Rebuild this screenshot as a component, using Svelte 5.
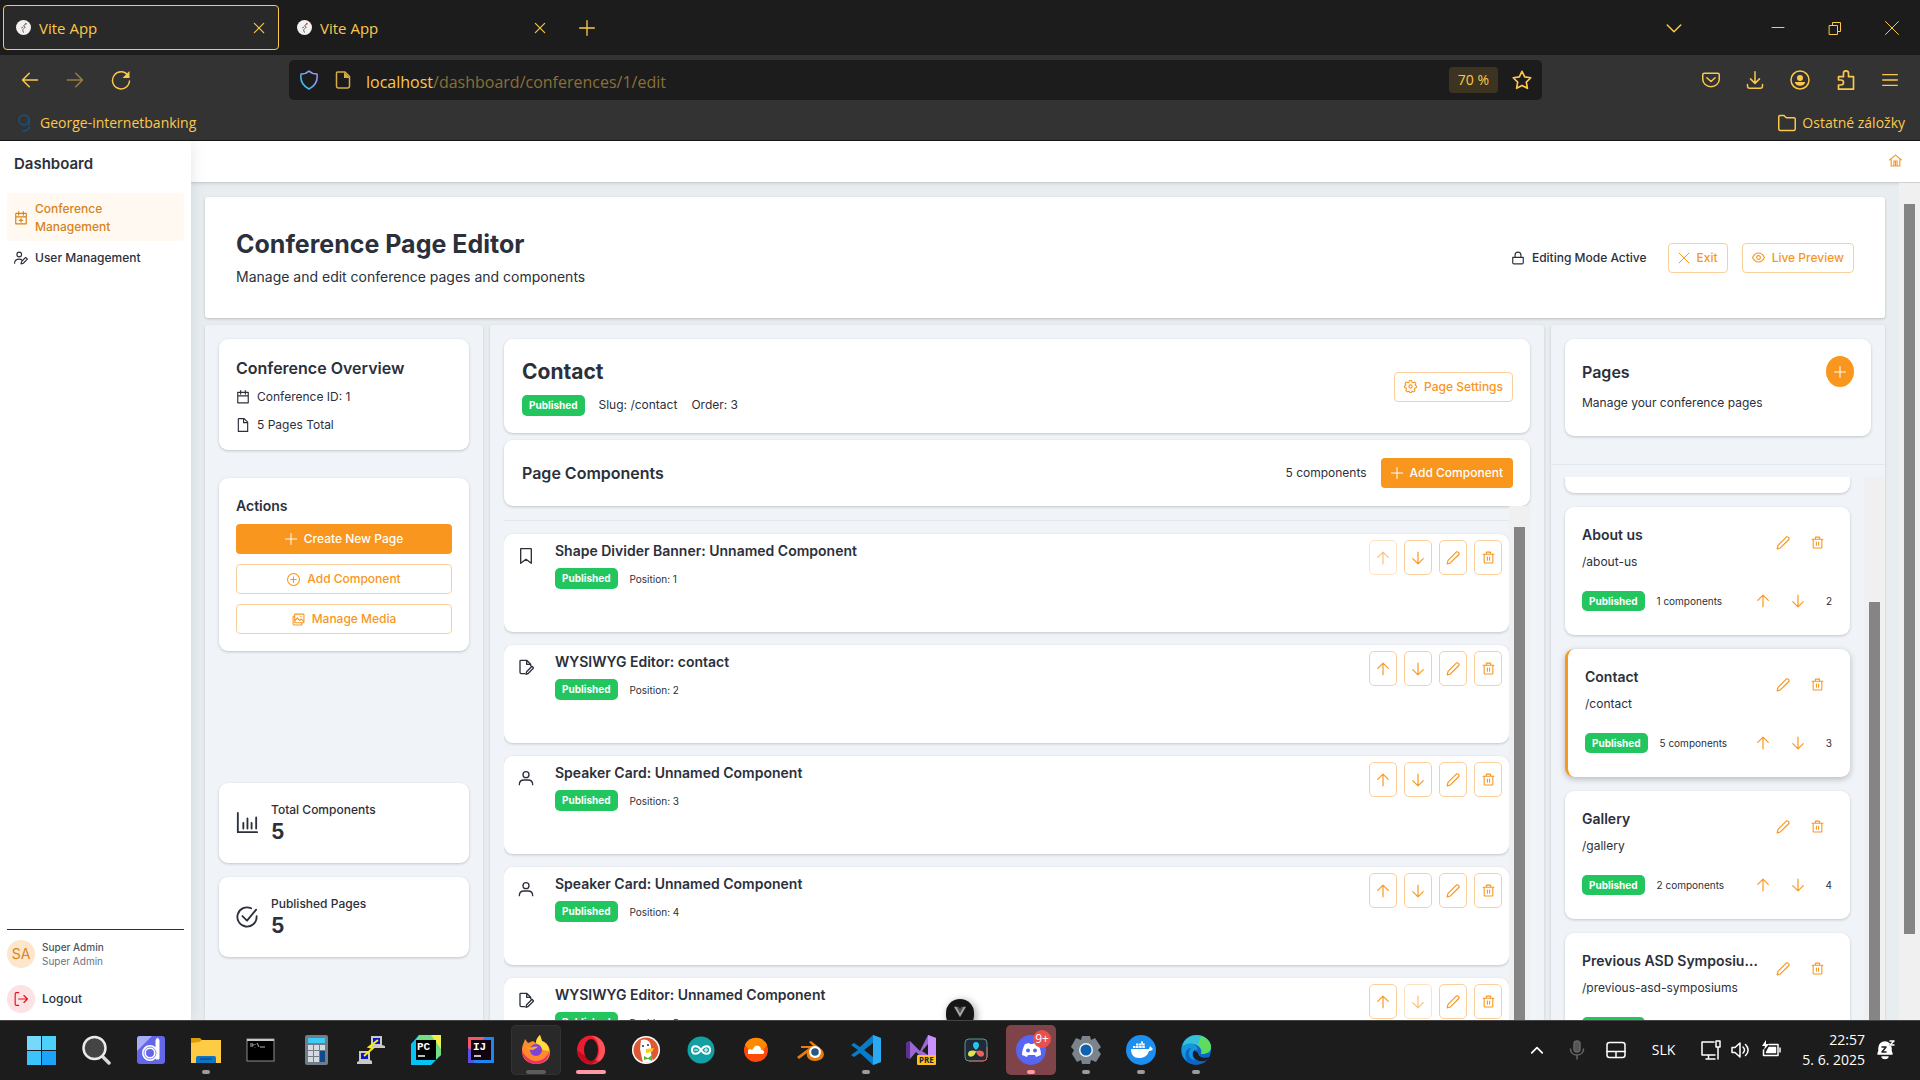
<script>
  // Line icons drawn on a 24-unit grid.
  const icons = {
    calendarPlus: 'M4 4h16a1 1 0 0 1 1 1v17H3V5a1 1 0 0 1 1-1zM3 10h18M8 1v6M16 1v6M12 13v6M9 16h6',
    calendar: 'M3 4h18v18H3zM3 10h18M8 1v6M16 1v6',
    userEdit: 'M13 6a4 4 0 1 1-8 0 4 4 0 0 1 8 0zM1 21c0-4 3-7 8-7 1.500 0 3 .3 4 .8M12 22l1-4 7-7 3 3-7 7z',
    user: 'M16.500 7a4.500 4.500 0 1 1-9 0 4.500 4.500 0 0 1 9 0zM2 22c0-5 3-7 7-7h6c4 0 7 2 7 7',
    lock: 'M3 11h18v9a2 2 0 0 1-2 2H5a2 2 0 0 1-2-2zM7 11V7a5 5 0 0 1 10 0v4',
    times: 'M4 4l16 16M20 4L4 20',
    exit: 'M2 2l20 20M22 2L2 22',
    eye: 'M1 12c5-11 17-11 22 0-5 11-17 11-22 0zM15.500 12a3.500 3.500 0 1 1-7 0 3.500 3.500 0 0 1 7 0z',
    file: 'M5 1h9l6 6v16H4V2a1 1 0 0 1 1-1zM13 1v7h7',
    fileEdit: 'M10 22H5a2 2 0 0 1-2-2V3a1 1 0 0 1 1-1h9l6 6v2M13 2v6h6M12 23l1-4 8-8 2.500 2.500-8 8z',
    plus: 'M12 1v22M1 12h22',
    plusCircle: 'M23 12a11 11 0 1 1-22 0 11 11 0 0 1 22 0zM12 7v10M7 12h10',
    images: 'M6 2h15a1 1 0 0 1 1 1v14a1 1 0 0 1-1 1H6a1 1 0 0 1-1-1V3a1 1 0 0 1 1-1zM5 6H3a1 1 0 0 0-1 1v13a2 2 0 0 0 2 2h14v-4M5 15l5-6 4 5 3-3 5 5M16 6.500h1',
    chart: 'M2 1v21h21M8 12v6M12.500 7v11M17 12v6M22 6v12',
    check: 'M22.500 11v1a10.500 10.500 0 1 1-6-9.500M7 11l5 5L22 4',
    cog: 'M10 1h4l.8 3 2 1L20 3.500 22 7l-1.500 2.500L23 11v3l-3 1-.8 2 1.300 3-3 2-2.500-1.500-1.500 2.500h-3L9 20.500 6.500 22l-3-2 1.300-3L4 15l-3-1v-3l2.500-1.500L2 7l2-3.500L7.200 5l2-1zM15 12a3 3 0 1 1-6 0 3 3 0 0 1 6 0z',
    bookmark: 'M4 1h15a1 1 0 0 1 1 1v21l-8-6-8 6z',
    up: 'M12 22V2M3 11l9-9 9 9',
    down: 'M12 2v20M3 13l9 9 9-9',
    pencil: 'M2 22l1.500-6L18 1.500c2-1 5.500 2 4 4.500L7.500 20.500z',
    trash: 'M2 6h20M4 6v15a1 1 0 0 0 1 1h14a1 1 0 0 0 1-1V6M8 6V3a1 1 0 0 1 1-1h6a1 1 0 0 1 1 1v3M10 11v6M14 11v6',
    home: 'M1 11L12 2l11 9M4 9v13h16V9M9 22v-9h6v9M12 14v8',
    logout: 'M8 1H4a2 2 0 0 0-2 2v18a2 2 0 0 0 2 2h4M8 12h15M17 6l6 6-6 6',
    back: 'M22 12H2M11 3l-9 9 9 9',
    forward: 'M2 12h20M13 3l9 9-9 9',
    chevron: 'M3 8l9 9 9-9',
    star: 'M12 1.500l3.200 6.800 7.300 1-5.300 5.200 1.300 7.500-6.500-3.500L5.500 22l1.300-7.500L1.500 9.300l7.300-1z',
    download: 'M12 1v15M6 10.500l6 6 6-6M2 18v2a3 3 0 0 0 3 3h14a3 3 0 0 0 3-3v-2',
    pocket: 'M3 3h18a2 2 0 0 1 2 2v6a11 10 0 0 1-22 0V5a2 2 0 0 1 2-2zM6.500 9l5.500 5 5.500-5',
    puzzle: 'M3 8h6V4a3 3 0 0 1 6 0v4h6v15H3v-5h3a2.500 2.500 0 0 0 0-6H3z',
    menu: 'M1 4h22M1 12h22M1 20h22',
    folder: 'M1 4a2 2 0 0 1 2-2h5l3 3h10a2 2 0 0 1 2 2v13a2 2 0 0 1-2 2H3a2 2 0 0 1-2-2z',
    caret: 'M3 17l9-9 9 9'
  };

  const components = [
    { icon: 'bookmark', title: 'Shape Divider Banner: Unnamed Component' },
    { icon: 'fileEdit', title: 'WYSIWYG Editor: contact' },
    { icon: 'user', title: 'Speaker Card: Unnamed Component' },
    { icon: 'user', title: 'Speaker Card: Unnamed Component' },
    { icon: 'fileEdit', title: 'WYSIWYG Editor: Unnamed Component' }
  ];

  const pages = [
    { title: 'About us', slug: '/about-us', count: 1, order: 2 },
    { title: 'Contact', slug: '/contact', count: 5, order: 3, active: true },
    { title: 'Gallery', slug: '/gallery', count: 2, order: 4 },
    { title: 'Previous ASD Symposiums', slug: '/previous-asd-symposiums', count: 1, order: 5 }
  ];

  const apps = [
    'Start', 'Search', 'Dopus', 'Explorer', 'Terminal', 'Calculator', 'PuTTY', 'PyCharm', 'IntelliJ', 'Firefox', 'Opera',
    'DuckDuckGo', 'Arduino', 'SoundCloud', 'Blender', 'VS Code', 'Visual Studio', 'Resolve', 'Discord', 'Settings', 'Docker', 'Edge'
  ];
  const running = ['Explorer', 'VS Code', 'Settings', 'Docker', 'Edge'];
</script>

{#snippet icon(name, cls = 'i14')}
  <svg class="icon {cls}" viewBox="0 0 24 24" aria-hidden="true"><path d={icons[name]} /></svg>
{/snippet}

{#snippet favicon()}
  <svg class="favicon" viewBox="0 0 16 16" aria-hidden="true">
    <circle cx="8" cy="8" r="8" fill="#f4f1f1" />
    <path d="M10 4L8 6.500l2 1-3 3M5.500 8.500l2-1M7 10.500l1 3" stroke="#6d5f61" stroke-width="1" fill="none" />
    <circle cx="10.500" cy="4" r="1" fill="#b55" />
  </svg>
{/snippet}

{#snippet appIcon(name)}
  <svg class="app-icon" viewBox="0 0 30 30" aria-hidden="true">
    {#if name === 'Start'}
      <path d="M1 1h14v14H1z" fill="#76d9fc" /><path d="M16 1h14v14H16z" fill="#4fd0fb" />
      <path d="M1 16h14v14H1z" fill="#3dc3fb" /><path d="M16 16h14v14H16z" fill="#1ba4fa" />
    {:else if name === 'Search'}
      <path d="M21 21l7 7" stroke="#d5d7d9" stroke-width="3.500" stroke-linecap="round" />
      <circle cx="13.500" cy="13" r="11" fill="#444" stroke="#e9ebec" stroke-width="2.500" />
    {:else if name === 'Dopus'}
      <rect x="1" y="1" width="28" height="28" rx="3" fill="#6366ea" /><path d="M1 4a3 3 0 0 1 3-3h12L1 16z" fill="#a9adf8" />
      <circle cx="14" cy="18" r="6" fill="none" stroke="#fff" stroke-width="4" /><path d="M20 24V5l1.500-2L23 5v19z" fill="#fff" stroke="#fff" />
      <circle cx="14" cy="18" r="6" fill="none" stroke="#8488f0" stroke-width="1" />
    {:else if name === 'Explorer'}
      <path d="M0 3h9l3 3h-1v5H0z" fill="#dd9b08" /><path d="M0 8l8-1 3-2h19v23H0z" fill="#ffcb45" />
      <path d="M5 28v-5a2 2 0 0 1 2-2h16a2 2 0 0 1 2 2v5z" fill="#0f74c4" /><path d="M9 24h12" stroke="#0a4f91" stroke-width="1.500" />
    {:else if name === 'Terminal'}
      <rect x="1" y="4" width="27" height="22" fill="#000" stroke="#8a8f94" /><path d="M1 5h27" stroke="#c3c7ca" stroke-width="2" />
      <path d="M4 9h3v2H4M9 9v1M9 12v0.500M11 8l2 4M14 12h5" stroke="#b5b5b5" fill="none" />
    {:else if name === 'Calculator'}
      <rect x="4" y="0" width="23" height="30" rx="2" fill="#747c87" /><path d="M7 3h17v5H7z" fill="#3ccbf4" />
      <path d="M7 10h5v5H7zM13 10h5v5h-5zM19 10h5v5h-5zM7 16h5v5H7zM13 16h5v5h-5zM7 22h5v5H7zM13 22h5v5h-5z" fill="#d3dae2" />
      <path d="M19 16h5v11h-5z" fill="#104a8c" />
    {:else if name === 'PuTTY'}
      <path d="M15 1h11v9l3 1v2H15zM3 16h11v9l2 1v3H1v-2l2-1z" fill="#c9c9c9" /><path d="M17 3h7v6h-7zM5 18h7v6H5z" fill="#0a12d4" />
      <path d="M22 5l-9 7 4 1-9 8" stroke="#f5ee0c" stroke-width="2" fill="none" />
    {:else if name === 'PyCharm'}
      <path d="M0 9l8-9h22v20L20 30H0z" fill="#06c3f5" /><path d="M8 0h22v20l-5 4V5H5z" fill="#74dd84" /><path d="M20 0h10v14z" fill="#eff04a" />
      <path d="M5 5h20v20H5z" fill="#000" /><text x="6" y="15" class="mono">PC</text><path d="M7 21h7" stroke="#fff" stroke-width="1.500" />
    {:else if name === 'IntelliJ'}
      <path d="M2 2h26v26H2z" fill="#1e86f0" /><path d="M2 2h17L2 20z" fill="#f5566a" /><path d="M2 13l6 3v12H2z" fill="#5d4fe0" />
      <path d="M5 5h20v20H5z" fill="#10030f" /><text x="7" y="15" class="mono">IJ</text><path d="M8 21h7" stroke="#fff" stroke-width="1.500" />
    {:else if name === 'Firefox'}
      <path d="M1 16C1 10 3 8 4 4l3 4 5-2 3 2c0-4 2-6 4-8l2 6c4 1 8 5 8 11 0 8-6 12-14 12S1 24 1 16z" fill="#ff8a2a" />
      <path d="M1 15c2 6 8 11 14 11s11-4 13-9c0 7-5 12-13 12S1 23 1 15z" fill="#f0306c" />
      <path d="M15 8c0-4 2-6 4-8l2 6c4 2 7 5 7 10l-6-1-4-5z" fill="#ffde3c" />
      <circle cx="15" cy="15" r="6" fill="#7d42d8" /><path d="M5 11c5 4 7-1 12 1l-5 3c-3 0-5-1-7-4z" fill="#ffa62e" />
    {:else if name === 'Opera'}
      <ellipse cx="15" cy="15" rx="14" ry="14.500" fill="#ed1c32" /><path d="M15 1c8 0 14 6 14 14s-6 14-14 14c6-2 8-8 8-14S21 3 15 1z" fill="#ff525a" />
      <path d="M1 15c1 10 8 14 14 14 3 0 6-1 8-3L13 24z" fill="#a7000f" opacity="0.600" /><ellipse cx="15" cy="15" rx="7" ry="11" fill="#1c1c1c" />
    {:else if name === 'DuckDuckGo'}
      <circle cx="15" cy="15" r="14" fill="#fff" /><circle cx="15" cy="15" r="12.500" fill="#de5833" />
      <path d="M10 5c5-2 10 1 10 7v6l2 9-10 1-3-14z" fill="#fff" /><path d="M15 14l8-1-2 4-6 1z" fill="#fdc91a" />
      <path d="M13 21l4 2 4-3v6l-4-2-4 1z" fill="#55b83c" /><circle cx="12" cy="11" r="1" fill="#234" /><circle cx="17" cy="10" r="1" fill="#234" />
    {:else if name === 'Arduino'}
      <circle cx="15" cy="15" r="13.500" fill="#12a0a5" /><path d="M15 15c-3-5-9-5-9 0s6 5 9 0 9-5 9 0-6 5-9 0z" fill="none" stroke="#fff" stroke-width="2" />
      <path d="M8 15h4M18 15h4M20 13v4" stroke="#fff" />
    {:else if name === 'SoundCloud'}
      <circle cx="15" cy="15" r="12" fill="#ff4a0a" /><path d="M4 10a12 12 0 0 1 22 0l-4 5H8z" fill="#ff8a00" />
      <path d="M7 19v-4l2-1 2 1 3-4c5-1 6 2 6 4 4 0 4 4 1 4z" fill="#fff" />
    {:else if name === 'Blender'}
      <path d="M1 22l12-9H5v-2h12l-4-4 2-1 9 7c7 5 4 13-5 13-6 0-9-4-8-8l-8 6z" fill="#ea7c0c" />
      <circle cx="19" cy="17" r="6" fill="#fff" /><circle cx="19" cy="17" r="3.800" fill="#265787" />
    {:else if name === 'VS Code'}
      <path d="M22 0l8 3v24l-8 3L9 18l-6 4-3-2 7-5-7-5 3-2 6 4z" fill="#087cc9" /><path d="M22 0l8 3v24l-8 3z" fill="#29aaf2" />
      <path d="M22 8v14l-9-7z" fill="#1c1c1c" />
    {:else if name === 'Visual Studio'}
      <path d="M0 8l4-2 10 10 8-16 8 3v22l-8 3L10 17l-6 7-4-2z" fill="#9a67d3" /><path d="M0 8l4-2v18l-4-2z" fill="#5d3191" /><path d="M22 0l8 3v22h-8z" fill="#c891fb" />
      <path d="M22 9v11l-6-4z" fill="#1c1c1c" /><rect x="11" y="20" width="19" height="10" rx="1" fill="#ffc21a" /><text x="13" y="28" class="pre">PRE</text>
    {:else if name === 'Resolve'}
      <rect x="4" y="4" width="22" height="22" rx="4" fill="#1d2c38" stroke="#5d9498" /><path d="M8 26h14a4 4 0 0 0 4-4V12" fill="none" stroke="#d85c50" />
      <path d="M12 10a3 3 0 0 1 6 0c0 3-2 4-3 5-1-1-3-2-3-5z" fill="#29c5e8" /><path d="M15 16c-1 7-8 7-8 3s5-4 8-3z" fill="#e1e34c" /><path d="M15 16c1 7 8 7 8 3s-5-4-8-3z" fill="#f2605a" />
    {:else if name === 'Discord'}
      <circle cx="15" cy="15" r="15" fill="#5865f2" />
      <path d="M9 9l4-1 1 1h3l1-1 4 1c2 4 3 7 3 11l-5 2-1-2H12l-1 2-5-2c0-4 1-7 3-11z" fill="#fff" /><circle cx="12" cy="15.500" r="2" fill="#5865f2" /><circle cx="19" cy="15.500" r="2" fill="#5865f2" />
    {:else if name === 'Settings'}
      <path d="M11 1h8l1 4 4-2 6 9-3 3 3 4-5 8-5-2-1 4h-8l-1-4-4 2-5-8 2-4-3-3 5-9 5 2z" fill="#7b838d" />
      <circle cx="15" cy="15" r="7" fill="#eef1f3" /><circle cx="15" cy="15" r="5.500" fill="#0d62b0" />
    {:else if name === 'Docker'}
      <circle cx="15" cy="15" r="15" fill="#1d8ff0" /><path d="M5 14h18l1-3 3 3c-2 2-3 2-4 2-2 6-6 7-10 7-5 0-8-3-8-9z" fill="#fff" />
      <path d="M7 12h12M10 9.500h9M15 7.500h2" stroke="#fff" stroke-width="2" stroke-dasharray="2.500 .6" />
    {:else if name === 'Edge'}
      <circle cx="15" cy="15" r="15" fill="#0c67c4" /><path d="M1 12C3 3 10 0 16 0c8 0 14 6 14 12 0 5-4 7-10 7 3-7-9-15-19-7z" fill="#35c1d8" />
      <path d="M20 1c6 2 10 6 10 11 0 5-4 7-10 7 2-4 0-7-3-9z" fill="#5fdc5d" /><path d="M13 15c-4 7 4 14 13 10l3-3c-6 2-12 0-12-4z" fill="#1c1c1c" />
      <path d="M1 12c8-7 15-2 16 3-5-2-8 5-3 10-6 0-8-7-4-12-4 0-8 5-4 13-4-3-6-8-5-14z" fill="#1596dd" />
    {/if}
  </svg>
{/snippet}

<div class="screen">
  <header class="tabs">
    <div class="tab current">{@render favicon()}<span>Vite App</span><button class="plain" aria-label="Close tab">{@render icon('times')}</button></div>
    <div class="tab">{@render favicon()}<span>Vite App</span><button class="plain" aria-label="Close tab">{@render icon('times')}</button></div>
    <button class="plain new-tab" aria-label="New tab">{@render icon('plus', 'i16')}</button>
    <div class="window-buttons">
      <button class="plain all-tabs" aria-label="List all tabs">{@render icon('chevron', 'i18')}</button>
      <button class="plain" aria-label="Minimize"><svg class="icon thin i14" viewBox="0 0 14 14"><path d="M1 6.500h12" /></svg></button>
      <button class="plain" aria-label="Restore"><svg class="icon thin i14" viewBox="0 0 14 14"><path d="M1.500 4.500h8v9h-8zM4.500 4.500v-3h8v9h-3" /></svg></button>
      <button class="plain" aria-label="Close"><svg class="icon thin i14" viewBox="0 0 14 14"><path d="M.5.500l13 13M13.500.500l-13 13" /></svg></button>
    </div>
  </header>

  <div class="toolbar">
    <div class="nav-buttons">
      <button class="plain" aria-label="Back">{@render icon('back', 'i18')}</button>
      <button class="plain dim" aria-label="Forward">{@render icon('forward', 'i18')}</button>
      <button class="plain" aria-label="Reload"><svg class="icon i20" viewBox="0 0 20 20"><path d="M17 5.500A8.500 8.500 0 1 0 18.500 11" /><path d="M18.500 1v7h-7z" fill="currentColor" stroke="none" /></svg></button>
    </div>
    <div class="url">
      <svg class="icon i20 shield" viewBox="0 0 20 20"><defs><linearGradient id="sh" x1="0" y1="1" x2="1" y2="0"><stop offset="0" stop-color="#27c9f5" /><stop offset="1" stop-color="#b48cf8" /></linearGradient></defs><path stroke="url(#sh)" d="M10 1c2 2 5 3 8 3 1 7-2 12-8 15C4 16 1 11 2 4c3 0 6-1 8-3z" /></svg>
      <svg class="icon i18 doc" viewBox="0 0 18 18"><path d="M3.500 1H11l4.500 4.500V15a2 2 0 0 1-2 2h-9a2 2 0 0 1-2-2V2a1 1 0 0 1 1-1z" /><path d="M10 1v6h6z" fill="currentColor" stroke="none" /></svg>
      <span class="address">localhost<span>/dashboard/conferences/1/edit</span></span>
      <button class="zoom">70 %</button>
      <button class="plain" aria-label="Bookmark this page">{@render icon('star', 'i20')}</button>
    </div>
    <div class="tools">
      <button class="plain" aria-label="Save to Pocket">{@render icon('pocket', 'i18')}</button>
      <button class="plain" aria-label="Downloads">{@render icon('download', 'i18')}</button>
      <button class="plain" aria-label="Account"><svg class="icon i20" viewBox="0 0 20 20"><circle cx="10" cy="10" r="9" /><circle cx="10" cy="8" r="3" fill="currentColor" stroke="none" /><path d="M5 12h10c0 5-10 5-10 0z" fill="currentColor" stroke="none" /></svg></button>
      <button class="plain" aria-label="Extensions">{@render icon('puzzle', 'i20')}</button>
      <button class="plain" aria-label="Menu">{@render icon('menu', 'i16')}</button>
    </div>
  </div>

  <div class="bookmarks">
    <a href="#george"><svg class="icon i18 george" viewBox="0 0 18 18"><circle cx="8" cy="6" r="5" /><path d="M13 6v5M13 13c0 3-3 4-6 4" /></svg>George-internetbanking</a>
    <a href="#other">{@render icon('folder', 'i18')}Ostatné záložky</a>
  </div>

  <div class="app">
    <aside class="sidebar">
      <h2>Dashboard</h2>
      <nav>
        <a class="active" href="#conferences">{@render icon('calendarPlus')}<span>Conference Management</span></a>
        <a href="#users">{@render icon('userEdit')}<span>User Management</span></a>
      </nav>
      <div class="account">
        <div class="account-row"><span class="avatar">SA</span><div class="who"><b>Super Admin</b><span>Super Admin</span></div></div>
        <button class="account-row logout"><span class="avatar red">{@render icon('logout', 'i14')}</span>Logout</button>
      </div>
    </aside>

    <div class="content">
      <div class="topbar"><a href="#home" aria-label="Home">{@render icon('home', 'i13')}</a></div>
      <div class="body">
        <main>
          <section class="hero">
            <div class="hero-text">
              <h1>Conference Page Editor</h1>
              <p>Manage and edit conference pages and components</p>
            </div>
            <div class="hero-actions">
              <span class="mode">{@render icon('lock')}Editing Mode Active</span>
              <button class="btn outline">{@render icon('exit', 'i12')}Exit</button>
              <button class="btn outline">{@render icon('eye', 'i13')}Live Preview</button>
            </div>
          </section>

          <div class="panels">
            <section class="panel left">
              <div class="card overview">
                <h3>Conference Overview</h3>
                <p>{@render icon('calendar')}Conference ID: 1</p>
                <p>{@render icon('file')}5 Pages Total</p>
              </div>
              <div class="card actions">
                <h4>Actions</h4>
                <button class="btn solid">{@render icon('plus', 'i12')}Create New Page</button>
                <button class="btn outline">{@render icon('plusCircle', 'i13')}Add Component</button>
                <button class="btn outline">{@render icon('images', 'i13')}Manage Media</button>
              </div>
              <div class="stats">
                <div class="card stat">{@render icon('chart', 'i22')}<div><span>Total Components</span><b>5</b></div></div>
                <div class="card stat">{@render icon('check', 'i22')}<div><span>Published Pages</span><b>5</b></div></div>
              </div>
            </section>

            <section class="panel middle">
              <div class="card page-head">
                <div>
                  <h2>Contact</h2>
                  <div class="meta"><span class="badge">Published</span><span>Slug: /contact</span><span>Order: 3</span></div>
                </div>
                <button class="btn outline">{@render icon('cog', 'i13')}Page Settings</button>
              </div>
              <div class="card list-head">
                <h3>Page Components</h3>
                <span>5 components</span>
                <button class="btn solid">{@render icon('plus', 'i12')}Add Component</button>
              </div>
              <div class="scroller">
                <div class="items">
                  <hr />
                  {#each components as c, i}
                    <article class="card item">
                      {@render icon(c.icon, 'i16 kind')}
                      <div class="item-text">
                        <h4>{c.title}</h4>
                        <div class="item-meta"><span class="badge">Published</span><span>Position: {i + 1}</span></div>
                      </div>
                      <div class="item-buttons">
                        <button aria-label="Move up" disabled={i === 0}>{@render icon('up')}</button>
                        <button aria-label="Move down" disabled={i === components.length - 1}>{@render icon('down')}</button>
                        <button aria-label="Edit">{@render icon('pencil')}</button>
                        <button aria-label="Delete">{@render icon('trash', 'i13')}</button>
                      </div>
                    </article>
                  {/each}
                </div>
                <div class="track"><div class="thumb list-thumb"></div></div>
              </div>
            </section>

            <section class="panel right">
              <div class="card pages-head">
                <div class="pages-title"><h3>Pages</h3><button class="round" aria-label="Add page">{@render icon('plus', 'i12')}</button></div>
                <p>Manage your conference pages</p>
              </div>
              <hr />
              <div class="scroller">
                <div class="page-list">
                  <div class="card tail"></div>
                  {#each pages as p}
                    <article class="card page" class:selected={p.active}>
                      <div class="page-top">
                        <div class="page-name"><h4>{p.title}</h4><span>{p.slug}</span></div>
                        <button class="ghost" aria-label="Edit page">{@render icon('pencil')}</button>
                        <button class="ghost" aria-label="Delete page">{@render icon('trash', 'i13')}</button>
                      </div>
                      <div class="page-bottom">
                        <span class="badge">Published</span><span class="count">{p.count} components</span>
                        <button class="ghost" aria-label="Move page up">{@render icon('up')}</button>
                        <button class="ghost" aria-label="Move page down">{@render icon('down')}</button>
                        <span class="order">{p.order}</span>
                      </div>
                    </article>
                  {/each}
                </div>
                <div class="track"><div class="thumb pages-thumb"></div></div>
              </div>
            </section>
          </div>
        </main>
        <div class="track main-track"><div class="thumb main-thumb"></div></div>
      </div>
    </div>
    <button class="devtools" aria-label="Toggle devtools"><svg viewBox="0 0 14 14"><path d="M0 1h3l4 7 4-7h3L7 13z" fill="#a4a4a4" /><path d="M3 1h2.500L7 3.500 8.500 1H11L7 8z" fill="#555" /></svg></button>
  </div>

  <footer class="taskbar">
    <div class="apps">
      {#each apps as name}
        <button class="app-button" class:focused={name === 'Firefox'} class:alert={name === 'Discord'} aria-label={name}>
          {@render appIcon(name)}
          {#if name === 'Discord'}<span class="count-badge">9+</span>{/if}
          {#if running.includes(name)}<i class="dot"></i>{/if}
          {#if name === 'Firefox'}<i class="dot wide"></i>{/if}
          {#if name === 'Opera'}<i class="dot widest"></i>{/if}
          {#if name === 'Discord'}<i class="dot pink"></i>{/if}
        </button>
      {/each}
    </div>
    <div class="tray">
      {@render icon('caret', 'i14 bold')}
      <svg class="icon i20 mic" viewBox="0 0 20 20"><rect x="7" y="1" width="6" height="11" rx="3" fill="#555" /><path d="M3.500 9c0 8 13 8 13 0M10 15v4" /></svg>
      <svg class="icon i20" viewBox="0 0 20 20"><rect x="1" y="2.500" width="18" height="15" rx="2.500" /><path d="M1 11.500h18M10 11.500v6" /></svg>
      <span class="lang">SLK</span>
      <div class="status">
        <svg class="icon i20" viewBox="0 0 20 20"><path d="M13 2H1v13h13M5 19h9M7.500 15v4" /><path d="M15 1h4v6h-4zM17 7v12" /></svg>
        <svg class="icon i20" viewBox="0 0 20 20"><path d="M1 7.500h3L9 3v14l-5-4.500H1zM12 7c2 2 2 4 0 6M14.500 4.500c3.500 3.500 3.500 7.500 0 11" /></svg>
        <svg class="icon i20" viewBox="0 0 20 20"><path d="M8 4.500h9v11H2.500V10" /><path d="M8 7.500h6.500v5h-9z" fill="#fff" /><path d="M19 8v4" /><path d="M5 0L1 6h3l-1 4 5-6H5z" fill="#fff" stroke="none" /></svg>
      </div>
      <div class="clock"><span>22:57</span><span>5. 6. 2025</span></div>
      <svg class="icon i20" viewBox="0 0 20 20"><path d="M3 14l1-3V8c0-4 3-6 6-6s6 3 6 6v3l1 3z" fill="#fff" /><path d="M7 17c1 2 5 2 6 0z" fill="#fff" /><path d="M7 7h4l-4 5h4M14 1h4l-3 4h4" stroke="#1c1c1c" /><path d="M15 1h4l-4 4h4" /></svg>
    </div>
  </footer>
</div>

<style>
  :global(body) { margin: 0; }
  .screen { display: flex; flex-direction: column; height: 100vh; overflow: hidden; font-family: Inter, "Liberation Sans", sans-serif; font-size: 12px; line-height: 18px; color: #2b303b; background: #e8edf0; }
  .screen :global(*) { box-sizing: border-box; }
  h1, h2, h3, h4, p { margin: 0; }
  button { font: inherit; color: inherit; padding: 0; border: 0; background: none; cursor: pointer; }
  a { color: inherit; text-decoration: none; }
  hr { flex: none; width: 100%; height: 1px; margin: 0; border: 0; background: #e3e8ed; }

  .icon { display: block; flex: none; fill: none; stroke: currentColor; stroke-width: 2; stroke-linejoin: round; stroke-linecap: round; }
  .i12 { width: 12px; height: 12px; }
  .i13 { width: 13px; height: 13px; }
  .i14 { width: 14px; height: 14px; }
  .i16 { width: 16px; height: 16px; }
  .i18 { width: 18px; height: 18px; }
  .i20 { width: 20px; height: 20px; }
  .i22 { width: 22px; height: 22px; }
  svg.i20[viewBox="0 0 20 20"], svg.i18[viewBox="0 0 18 18"] { stroke-width: 1.500; }
  .thin { stroke-width: 1; }
  .plain { display: flex; align-items: center; justify-content: center; }

  .tabs, .toolbar, .bookmarks { flex: none; display: flex; align-items: center; color: #fcc84c; font-family: "Open Sans", "Noto Sans", sans-serif; font-size: 15px; line-height: 20px; }
  .tabs { height: 55px; padding: 0 21px 0 3px; background: #1c1c1c; }
  .tab { display: flex; align-items: center; gap: 8px; width: 276px; height: 45px; margin-right: 5px; padding: 0 12px; border: 1px solid transparent; border-radius: 4px; }
  .tab.current { background: #292929; border-color: #fcc84c; }
  .tab .plain { margin-left: auto; }
  .favicon { width: 15px; height: 15px; }
  .new-tab { width: 44px; }
  .window-buttons { display: flex; margin-left: auto; gap: 43px; align-items: center; }
  .all-tabs { margin-right: 45px; }
  .toolbar { height: 50px; background: #333; padding: 0 22px 0 21px; }
  .nav-buttons { display: flex; align-items: center; gap: 27px; width: 268px; }
  .dim { opacity: 0.500; }
  .url { display: flex; align-items: center; flex: 1; height: 40px; padding: 0 10px; border-radius: 5px; background: #1c1c1c; }
  .doc { margin: 0 14px 0 15px; color: #d8ab43; }
  .address { flex: 1; padding-top: 3px; font-size: 16px; }
  .address span { color: #8a7038; }
  .zoom { padding: 3px 9px; margin-right: 14px; border-radius: 4px; background: #3d3321; font-size: 14px; }
  .tools { display: flex; align-items: center; gap: 26px; margin-left: 160px; }
  .bookmarks { height: 36px; padding: 1px 15px 0 16px; justify-content: space-between; background: #333; border-bottom: 1px solid #151515; font-size: 14px; }
  .bookmarks a { display: flex; align-items: center; gap: 6px; }
  .george { color: #17527e; }

  .app { position: relative; flex: 1; min-height: 0; display: flex; overflow: hidden; }
  .sidebar { position: relative; z-index: 1; width: 191px; flex: none; display: flex; flex-direction: column; padding: 0 7px; background: #fff; box-shadow: 0 0 14px rgba(60, 80, 90, 0.150); }
  .sidebar h2 { padding: 13px 7px 19px; font-size: 15px; line-height: 20px; font-weight: 600; }
  .sidebar nav a { display: flex; align-items: center; gap: 7px; padding: 7px 7px 5px; border-radius: 4px; font-weight: 500; }
  .sidebar nav a.active { margin-bottom: 1px; color: #d6831c; background: #fff9f2; }
  .account { display: flex; flex-direction: column; gap: 17px; margin-top: auto; padding: 10px 0 7px; border-top: 1px solid #2b303b; }
  .account-row { display: flex; align-items: center; gap: 7px; }
  .avatar { display: flex; align-items: center; justify-content: center; width: 28px; height: 28px; border-radius: 50%; background: #fde6cb; color: #d6831c; font-size: 14px; }
  .avatar.red { background: #fde2e4; color: #e5101f; }
  .who { display: flex; flex-direction: column; font-size: 10px; line-height: 14px; color: #6b7280; }
  .who b { font-weight: 500; color: #4b5563; }
  .logout { font-weight: 500; }

  .content { flex: 1; min-width: 0; display: flex; flex-direction: column; }
  .topbar { flex: none; display: flex; align-items: center; justify-content: flex-end; height: 42px; padding: 0 18px 2px; background: #fff; border-bottom: 1px solid #cdd1d3; box-shadow: 0 1px 3px rgba(0, 0, 0, 0.100); color: #f8961e; }
  .body { flex: 1; min-height: 0; display: flex; }
  main { flex: 1; min-width: 0; display: flex; flex-direction: column; gap: 7px; padding: 14px 14px 0; }
  .hero { flex: none; display: flex; align-items: center; justify-content: space-between; height: 121px; padding: 0 31px; border-radius: 3px; background: #fff; box-shadow: 0 1px 3px rgba(0, 0, 0, 0.200); }
  .hero-text { padding-bottom: 2px; }
  h1 { font-size: 25px; line-height: 34px; font-weight: 700; }
  .hero p { margin-top: 6px; font-size: 14px; line-height: 20px; }
  .hero-actions { display: flex; align-items: center; gap: 14px; }
  .mode { display: flex; align-items: center; gap: 7px; margin-right: 7px; font-weight: 500; }

  .btn { display: flex; align-items: center; justify-content: center; gap: 7px; height: 30px; padding: 0 9px; border-radius: 4px; font-weight: 500; white-space: nowrap; }
  .outline { border: 1px solid #fbcf9b; color: #f8961e; }
  .solid { background: #f8961e; color: #fff; padding: 0 10px; }

  .panels { flex: 1; min-height: 0; display: flex; gap: 7px; }
  .panel { display: flex; flex-direction: column; padding: 14px 14px 0; border-radius: 3px 3px 0 0; background: #f0f4f9; box-shadow: 0 1px 3px rgba(0, 0, 0, 0.150); }
  .left { width: 278px; flex: none; }
  .middle { flex: 1; min-width: 0; }
  .right { width: 334px; flex: none; padding: 14px 0 0; }
  .card { flex: none; border-radius: 9px; background: #fff; box-shadow: 0 1px 3px rgba(0, 0, 0, 0.200); }
  h3 { font-size: 16px; line-height: 22px; font-weight: 600; }
  h4 { font-size: 14px; line-height: 20px; font-weight: 600; }

  .overview { display: flex; flex-direction: column; gap: 8px; padding: 18px 17px 15px; }
  .overview p { display: flex; align-items: center; gap: 7px; line-height: 20px; }
  .actions { display: flex; flex-direction: column; gap: 10px; margin-top: 28px; padding: 18px 17px 17px; }
  .actions h4 { margin-bottom: -2px; }
  .stats { display: flex; flex-direction: column; gap: 14px; margin: auto 0 63px; }
  .stat { display: flex; align-items: center; gap: 13px; height: 80px; padding: 0 17px; }
  .stat div { display: flex; flex-direction: column; font-weight: 500; }
  .stat b { font-size: 21px; line-height: 26px; font-weight: 700; }

  .page-head { display: flex; align-items: center; justify-content: space-between; height: 94px; padding: 1px 17px 0 18px; }
  .page-head h2 { font-size: 21px; line-height: 28px; font-weight: 700; }
  .meta { display: flex; align-items: center; gap: 14px; margin-top: 9px; }
  .badge { display: inline-block; padding: 0 7px; border-radius: 5px; background: #22c55e; color: #fff; font-size: 10px; line-height: 21px; font-weight: 700; }
  .list-head { display: flex; align-items: center; gap: 14px; height: 66px; margin-top: 7px; padding: 0 17px 0 18px; }
  .list-head h3 { flex: 1; }
  .scroller { flex: 1; min-height: 0; display: flex; overflow: hidden; }
  .items { flex: 1; min-width: 0; display: flex; flex-direction: column; gap: 13px; padding-top: 14px; }
  .item { display: flex; height: 98px; padding: 6px 7px 0 14px; }
  .item :global(.kind) { margin-top: 8px; }
  .item-text { flex: 1; margin: 1px 0 0 21px; }
  .item-meta { display: flex; align-items: center; gap: 12px; margin-top: 7px; font-size: 10px; }
  .item-buttons { display: flex; gap: 7px; }
  .item-buttons button { display: flex; align-items: center; justify-content: center; width: 28px; height: 35px; border: 1px solid #fbcf9b; border-radius: 5px; color: #f8961e; }
  .item-buttons button:disabled { opacity: 0.600; }

  .pages-head { margin: 0 14px 28px; padding: 17px 17px 24px; }
  .pages-title { display: flex; align-items: center; justify-content: space-between; }
  .round { display: flex; align-items: center; justify-content: center; width: 28px; height: 31px; border-radius: 50%; background: #f8961e; color: #fff; }
  .pages-head p { margin-top: 7px; }
  .right .scroller { margin-top: 12px; }
  .page-list { flex: 1; min-width: 0; display: flex; flex-direction: column; gap: 14px; padding: 0 14px; }
  .tail { height: 16px; border-radius: 0 0 9px 9px; }
  .page { height: 128px; padding: 18px 15px 0 17px; }
  .page.selected { border-left: 3px solid #f8961e; box-shadow: 0 2px 6px rgba(0, 0, 0, 0.250); }
  .page-top { display: flex; align-items: flex-start; }
  .page-name { flex: 1; min-width: 0; display: flex; flex-direction: column; padding-right: 7px; }
  .page-name h4 { margin-bottom: 8px; overflow: hidden; text-overflow: ellipsis; white-space: nowrap; }
  .ghost { display: flex; align-items: center; justify-content: center; width: 35px; height: 35px; flex: none; color: #f8961e; }
  .page-bottom { display: flex; align-items: center; margin-top: 12px; font-size: 10px; }
  .page-bottom .badge { line-height: 20px; }
  .count { flex: 1; margin-left: 12px; white-space: nowrap; }
  .order { width: 20px; padding-right: 3px; text-align: right; }

  .track { width: 21px; flex: none; display: flex; justify-content: center; background: #f0f0f0; }
  .thumb { width: 11px; background: #858585; }
  .main-thumb { height: 730px; margin-top: 21px; }
  .list-thumb { margin-top: 21px; }
  .pages-thumb { margin-top: 125px; }

  .devtools { position: absolute; z-index: 2; left: 50%; bottom: -9px; width: 28px; height: 30px; margin-left: -14px; border-radius: 14px; background: #161616; box-shadow: 2px 2px 8px rgba(0, 0, 0, 0.400); }
  .devtools svg { display: block; width: 12px; height: 12px; margin: -4px auto 0; }

  .taskbar { flex: none; display: flex; align-items: center; justify-content: space-between; height: 60px; padding: 0 25px 1px 16px; background: #1c1c1c; border-top: 1px solid #454545; color: #fff; font-family: "Open Sans", "Noto Sans", sans-serif; }
  .apps { display: flex; gap: 5px; }
  .app-button { position: relative; display: flex; align-items: center; justify-content: center; width: 50px; height: 50px; border-radius: 5px; }
  .app-icon { width: 30px; height: 30px; }
  .app-icon text { fill: #fff; font-family: "Liberation Mono", monospace; font-size: 11px; font-weight: 700; }
  .app-icon text.pre { fill: #222; font-family: "Open Sans", sans-serif; font-size: 8px; }
  .focused { background: #292929; box-shadow: inset 0 0 0 1px #333; }
  .alert { background: #7f4449; }
  .dot { position: absolute; left: 21px; bottom: 1px; width: 8px; height: 4px; border-radius: 2px; background: #9b9b9b; }
  .dot.wide { left: 15px; width: 20px; background: #5c5c58; }
  .dot.widest { left: 10px; width: 30px; background: #ff99a4; }
  .dot.pink { background: #ff99a4; }
  .count-badge { position: absolute; right: 5px; top: 5px; width: 18px; height: 18px; border-radius: 9px; background: #ea4f50; color: #fff; font-size: 12px; line-height: 17px; }
  .tray { display: flex; align-items: center; font-size: 14px; line-height: 20px; }
  .mic { margin: 0 19px 0 23px; color: #666; }
  .bold { stroke-width: 3; }
  .lang { margin: 0 26px; }
  .status { display: flex; gap: 10px; }
  .clock { display: flex; flex-direction: column; align-items: flex-end; margin: 0 10px 0 21px; }
</style>
